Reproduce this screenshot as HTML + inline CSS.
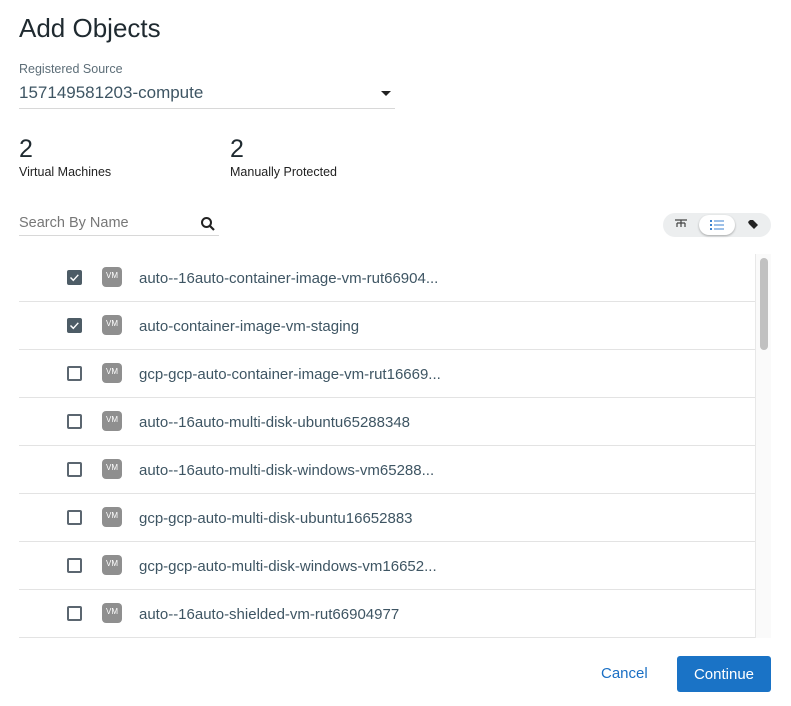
<!DOCTYPE html>
<html><head><style>
*{margin:0;padding:0;box-sizing:border-box}
body{width:791px;height:706px;background:#fff;font-family:"Liberation Sans",sans-serif;position:relative;overflow:hidden;color:#222}
.a{position:absolute}
.row{position:absolute;left:19px;width:736px;height:48px;border-bottom:1px solid #e3e3e3}
.cb{position:absolute;left:48px;top:16px;width:15px;height:15px;border:2px solid #5b6670;border-radius:2px}
.cb.on{background:#4d5c66;border-color:#4d5c66}
.vm{position:absolute;left:83px;top:13px;width:20px;height:20px;background:#8f8f8f;border-radius:4px;color:#fff;font-size:8px;text-align:center;line-height:18px}
.tx{position:absolute;left:120px;top:16px;font-size:15px;color:#3e5563;white-space:nowrap}
</style></head><body>
<div class="a" style="left:19px;top:13px;font-size:26px;color:#1f2a30">Add Objects</div>
<div class="a" style="left:19px;top:62px;font-size:12.5px;color:#5d6e78">Registered Source</div>
<div class="a" style="left:19px;top:83px;font-size:17px;color:#3e5563">157149581203-compute</div>
<div class="a" style="left:381px;top:91px;width:0;height:0;border-left:5px solid transparent;border-right:5px solid transparent;border-top:5px solid #222"></div>
<div class="a" style="left:19px;top:108px;width:376px;height:1px;background:#d8d8d8"></div>
<div class="a" style="left:19px;top:135px;font-size:25px;color:#1f2a30">2</div>
<div class="a" style="left:19px;top:165px;font-size:12.5px;color:#222">Virtual Machines</div>
<div class="a" style="left:230px;top:135px;font-size:25px;color:#1f2a30">2</div>
<div class="a" style="left:230px;top:165px;font-size:12.5px;color:#222">Manually Protected</div>
<div class="a" style="left:19px;top:215px;font-size:14.5px;color:#777">Search By Name</div>
<svg class="a" style="left:200px;top:216px" width="16" height="16" viewBox="0 0 16 16"><circle cx="6.5" cy="6.5" r="4.5" fill="none" stroke="#222" stroke-width="2"/><path d="M10 10l4 4" stroke="#222" stroke-width="2.2"/></svg>
<div class="a" style="left:19px;top:235px;width:200px;height:1px;background:#d8d8d8"></div>
<div class="a" style="left:663px;top:213px;width:108px;height:24px;background:#eceeef;border-radius:12px"></div>
<div class="a" style="left:699px;top:215px;width:36px;height:20px;background:#fff;border-radius:10px;box-shadow:0 1px 2px rgba(0,0,0,.3)"></div>
<svg class="a" style="left:674px;top:219px" width="14" height="10"><path d="M1 1h12M7 1v4M3 4h8M3 4v4M7 4v4M11 4v4" stroke="#444" stroke-width="1.2" fill="none"/></svg>
<svg class="a" style="left:710px;top:220px" width="14" height="10"><g fill="#3b82d0"><rect x="0" y="0" width="2" height="2"/><rect x="0" y="4" width="2" height="2"/><rect x="0" y="8" width="2" height="2"/><rect x="4" y="0.5" width="10" height="1"/><rect x="4" y="4.5" width="10" height="1"/><rect x="4" y="8.5" width="10" height="1"/></g></svg>
<svg class="a" style="left:747px;top:219px" width="12" height="12"><path d="M1 3l2-2h3l5 5-4 4-5-5z" fill="#222"/></svg>
<div class="a" style="left:19px;top:254px;width:752px;height:384px;overflow:hidden">
<div class="row" style="left:0;top:0"><div class="cb on"><svg width="11" height="11" style="position:absolute;left:0;top:0"><path d="M1.5 5.5l2.8 2.8 5-5.5" stroke="#fff" stroke-width="1.4" fill="none"/></svg></div><div class="vm">VM</div><div class="tx">auto--16auto-container-image-vm-rut66904...</div></div>
<div class="row" style="left:0;top:48px"><div class="cb on"><svg width="11" height="11" style="position:absolute;left:0;top:0"><path d="M1.5 5.5l2.8 2.8 5-5.5" stroke="#fff" stroke-width="1.4" fill="none"/></svg></div><div class="vm">VM</div><div class="tx">auto-container-image-vm-staging</div></div>
<div class="row" style="left:0;top:96px"><div class="cb"></div><div class="vm">VM</div><div class="tx">gcp-gcp-auto-container-image-vm-rut16669...</div></div>
<div class="row" style="left:0;top:144px"><div class="cb"></div><div class="vm">VM</div><div class="tx">auto--16auto-multi-disk-ubuntu65288348</div></div>
<div class="row" style="left:0;top:192px"><div class="cb"></div><div class="vm">VM</div><div class="tx">auto--16auto-multi-disk-windows-vm65288...</div></div>
<div class="row" style="left:0;top:240px"><div class="cb"></div><div class="vm">VM</div><div class="tx">gcp-gcp-auto-multi-disk-ubuntu16652883</div></div>
<div class="row" style="left:0;top:288px"><div class="cb"></div><div class="vm">VM</div><div class="tx">gcp-gcp-auto-multi-disk-windows-vm16652...</div></div>
<div class="row" style="left:0;top:336px"><div class="cb"></div><div class="vm">VM</div><div class="tx">auto--16auto-shielded-vm-rut66904977</div></div>
<div class="a" style="left:736px;top:0;width:16px;height:384px;background:#fafafa;border-left:1px solid #e8e8e8"></div>
<div class="a" style="left:741px;top:4px;width:8px;height:92px;background:#c1c1c1;border-radius:4px"></div>
</div>
<div class="a" style="left:601px;top:665px;font-size:15px;color:#1a6fc4">Cancel</div>
<div class="a" style="left:677px;top:656px;width:94px;height:36px;background:#1a73c6;border-radius:3px;color:#fff;font-size:15px;text-align:center;line-height:37px">Continue</div>
</body></html>
